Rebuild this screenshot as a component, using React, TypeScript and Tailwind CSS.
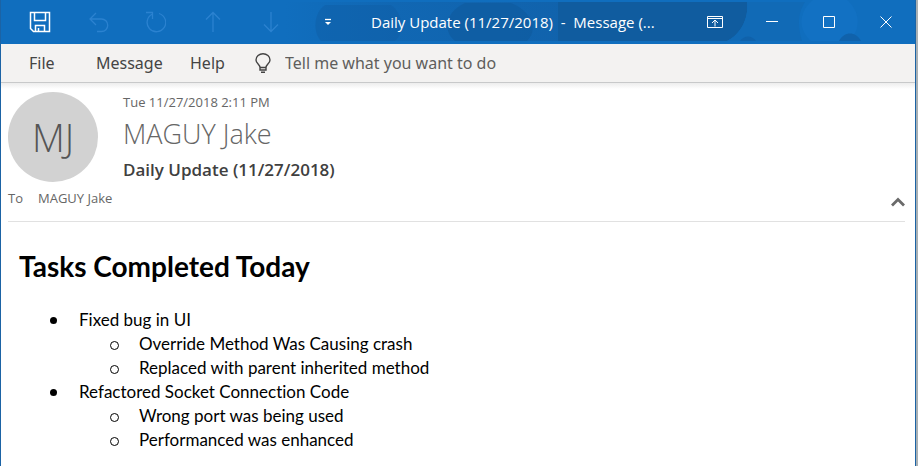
import React from "react";

const tasks = [
  {
    title: "Fixed bug in UI",
    items: ["Override Method Was Causing crash", "Replaced with parent inherited method"],
  },
  {
    title: "Refactored Socket Connection Code",
    items: ["Wrong port was being used", "Performanced was enhanced"],
  },
];

function BarButton({ label, className, children }: { label: string; className: string; children: React.ReactNode }) {
  return (
    <button type="button" aria-label={label} className={`flex h-full shrink-0 items-center justify-center ${className}`}>
      {children}
    </button>
  );
}

function Icon({ size = 22, children }: { size?: number; children: React.ReactNode }) {
  return (
    <svg width={size} height={size} viewBox={`0 0 ${size} ${size}`} fill="none" stroke="currentColor" strokeWidth="1.3" aria-hidden="true">
      {children}
    </svg>
  );
}

function TitleArt() {
  return (
    <svg className="absolute inset-y-0 right-0 h-full w-[630px]" viewBox="0 0 630 44" preserveAspectRatio="xMaxYMid slice" aria-hidden="true">
      <defs>
        <linearGradient id="band" x1="0" x2="1">
          <stop offset="0" stopColor="#1160a8" stopOpacity="0" />
          <stop offset="0.4" stopColor="#1160a8" stopOpacity="0.5" />
          <stop offset="1" stopColor="#1160a8" stopOpacity="0.8" />
        </linearGradient>
      </defs>
      <rect x="0" y="2" width="273" height="39" fill="url(#band)" />
      <path d="M40 5c-12 8-12 28-4 36h74c10-8 8-28-4-36Z" fill="#105ea5" opacity="0.45" />
      <path d="M170 41c-14-12-8-30 10-38h46c20 8 28 26 16 38Z" fill="#105a9e" opacity="0.65" />
      <path d="M273 2h189c2 16-6 32-20 39H273Z" fill="#105c9f" />
      <path d="M462 2h58c-8 12-7 26-3 39h-75c14-7 22-23 20-39Z" fill="#116ab6" />
      <path d="M528 0h34c14 12 14 30 2 41h-38c-14-12-12-30 2-41Z" fill="#1474c8" opacity="0.5" />
      <path d="M554 41c5-10 17-10 22 0Z" fill="#1062ab" />
      <path d="M455 41c4-6 12-6 16 0Z" fill="#1062ab" />
    </svg>
  );
}

function TitleBar() {
  return (
    <header className="relative h-11 bg-[#106ebe] text-white">
      <TitleArt />
      <div className="relative flex h-full items-center">
        <div className="flex h-full items-center pl-2">
          <BarButton label="Save" className="w-[62px]">
            <Icon>
              <path d="M1.5 1.5h19v19H4.5l-3-3zM5.5 1.5v8h11v-8M6.5 20.5v-6h9v6M9.5 17v3.500" strokeWidth="1.5" />
            </Icon>
          </BarButton>
          <div className="flex h-full items-center text-[#2b82d0]">
            <BarButton label="Undo" className="w-[55px]">
              <Icon>
                <path d="M8 2 2 8l6 6M2 8h11.500a6 6 0 0 1 0 12.500H9" />
              </Icon>
            </BarButton>
            <BarButton label="Redo" className="w-[58px]">
              <Icon>
                <path d="M2 1.500h6.500V8M8.500 1.500v1.500A9.300 9.300 0 1 0 15 2.500" />
              </Icon>
            </BarButton>
            <BarButton label="Previous item" className="w-[58px]">
              <Icon>
                <path d="M11 21V1.500M4 8.500l7-7 7 7" />
              </Icon>
            </BarButton>
            <BarButton label="Next item" className="w-[58px]">
              <Icon>
                <path d="M11 1v19.500M4 13.500l7 7 7-7" />
              </Icon>
            </BarButton>
          </div>
          <BarButton label="Customize toolbar" className="w-[56px]">
            <Icon size={8}>
              <path d="M1 1.500h6" />
              <path d="M1 4h6L4 7z" fill="currentColor" stroke="none" />
            </Icon>
          </BarButton>
        </div>
        <h1 className="min-w-0 flex-1 whitespace-pre pl-[15px] font-['Open_Sans','Noto_Sans',sans-serif] text-[15px] leading-5">
          Daily Update (11/27/2018)  -  Message (...
        </h1>
        <div className="flex h-full items-center pr-px">
          <BarButton label="Ribbon display options" className="w-[57px]">
            <Icon size={16}>
              <path d="M.5 2.500h15v11H.5zM.5 4.500h15M8 12.500V6M5 9l3-3 3 3" strokeWidth="1" />
            </Icon>
          </BarButton>
          <BarButton label="Minimize" className="w-[57px]">
            <Icon size={12}>
              <path d="M0 5.500h12" strokeWidth="1" />
            </Icon>
          </BarButton>
          <BarButton label="Maximize" className="w-[57px]">
            <Icon size={12}>
              <path d="M.5.500h11v11H.5z" strokeWidth="1" />
            </Icon>
          </BarButton>
          <BarButton label="Close" className="w-[57px]">
            <Icon size={12}>
              <path d="m.5.500 11 11M11.500.500l-11 11" strokeWidth="1" />
            </Icon>
          </BarButton>
        </div>
      </div>
    </header>
  );
}

function MenuBar() {
  return (
    <nav className="flex h-[39px] items-center border-b border-[#c8c9ca] bg-[#f3f2f1] pl-7 font-['Noto_Sans','Open_Sans',sans-serif] text-base text-[#444]">
      <button type="button" className="w-[67px] text-left">File</button>
      <button type="button" className="w-[94px] text-left">Message</button>
      <button type="button" className="w-[65px] text-left">Help</button>
      <label htmlFor="tell-me" aria-label="Tell me what you want to do" className="flex w-[30px] shrink-0">
        <svg width="16" height="20" viewBox="0 0 16 20" fill="none" stroke="currentColor" strokeWidth="1.400" aria-hidden="true">
          <path d="M5 14.500c0-3-4-4-4-7.500a7 6.300 0 0 1 14 0c0 3.500-4 4.500-4 7.500zM5 14.500v2.500h6v-2.500M6 19.300h4" />
        </svg>
      </label>
      <input id="tell-me" type="text" placeholder="Tell me what you want to do" className="h-8 min-w-0 flex-1 bg-transparent outline-none placeholder:text-[#605e5c]" />
    </nav>
  );
}

function MessageHeader() {
  return (
    <section className="bg-linear-to-b from-[#ededed] to-white to-[6px] pt-[9px] pr-[10px] pl-[7px] font-['Open_Sans','Noto_Sans',sans-serif] text-[#666]">
      <div className="flex gap-[25px]">
        <div className="flex size-[90px] shrink-0 items-center justify-center rounded-full bg-[#d2d2d2] text-[38px] font-light text-[#555]">
          MJ
        </div>
        <div className="min-w-0">
          <p className="text-[13px] leading-5">Tue 11/27/2018 2:11 PM</p>
          <p className="pt-1 text-[27px] leading-9 font-light">MAGUY Jake</p>
          <h2 className="pt-1 text-[17px] leading-7 font-semibold text-[#404040]">Daily Update (11/27/2018)</h2>
        </div>
      </div>
      <div className="flex h-[38px] items-center border-b border-[#e1e1e1] pb-2 text-[13px]">
        <span className="w-[30px]">To</span>
        <span className="flex-1">MAGUY Jake</span>
        <button type="button" aria-label="Collapse header" className="pt-[6px]">
          <svg width="14" height="10" viewBox="0 0 14 10" fill="none" stroke="#6a6a6a" strokeWidth="2.800" aria-hidden="true">
            <path d="M1 8.500l6-6 6 6" />
          </svg>
        </button>
      </div>
    </section>
  );
}

function MessageBody() {
  return (
    <article className="px-[18px] pt-[26px] pb-3 font-[Lato,sans-serif] text-black [font-variant-ligatures:none]">
      <h2 className="text-[28px] leading-9 font-bold">Tasks Completed Today</h2>
      <ul className="pt-6 text-[17px] leading-6">
        {tasks.map((task) => (
          <li key={task.title}>
            <div className="flex items-center pl-[31px]">
              <span className="w-[29px]">
                <span className="block size-[7px] rounded-full bg-black" />
              </span>
              {task.title}
            </div>
            <ul>
              {task.items.map((item) => (
                <li key={item} className="flex items-center pl-[91px]">
                  <span className="w-[29px] pt-[2px]">
                    <span className="block size-[9px] rounded-full border border-black" />
                  </span>
                  {item}
                </li>
              ))}
            </ul>
          </li>
        ))}
      </ul>
    </article>
  );
}

export default function App() {
  return (
    <div className="min-h-screen bg-[#a9b0b3] pr-[2px]">
      <main className="min-h-screen border-x border-[#1b63a5] bg-white">
        <TitleBar />
        <MenuBar />
        <MessageHeader />
        <MessageBody />
      </main>
    </div>
  );
}
